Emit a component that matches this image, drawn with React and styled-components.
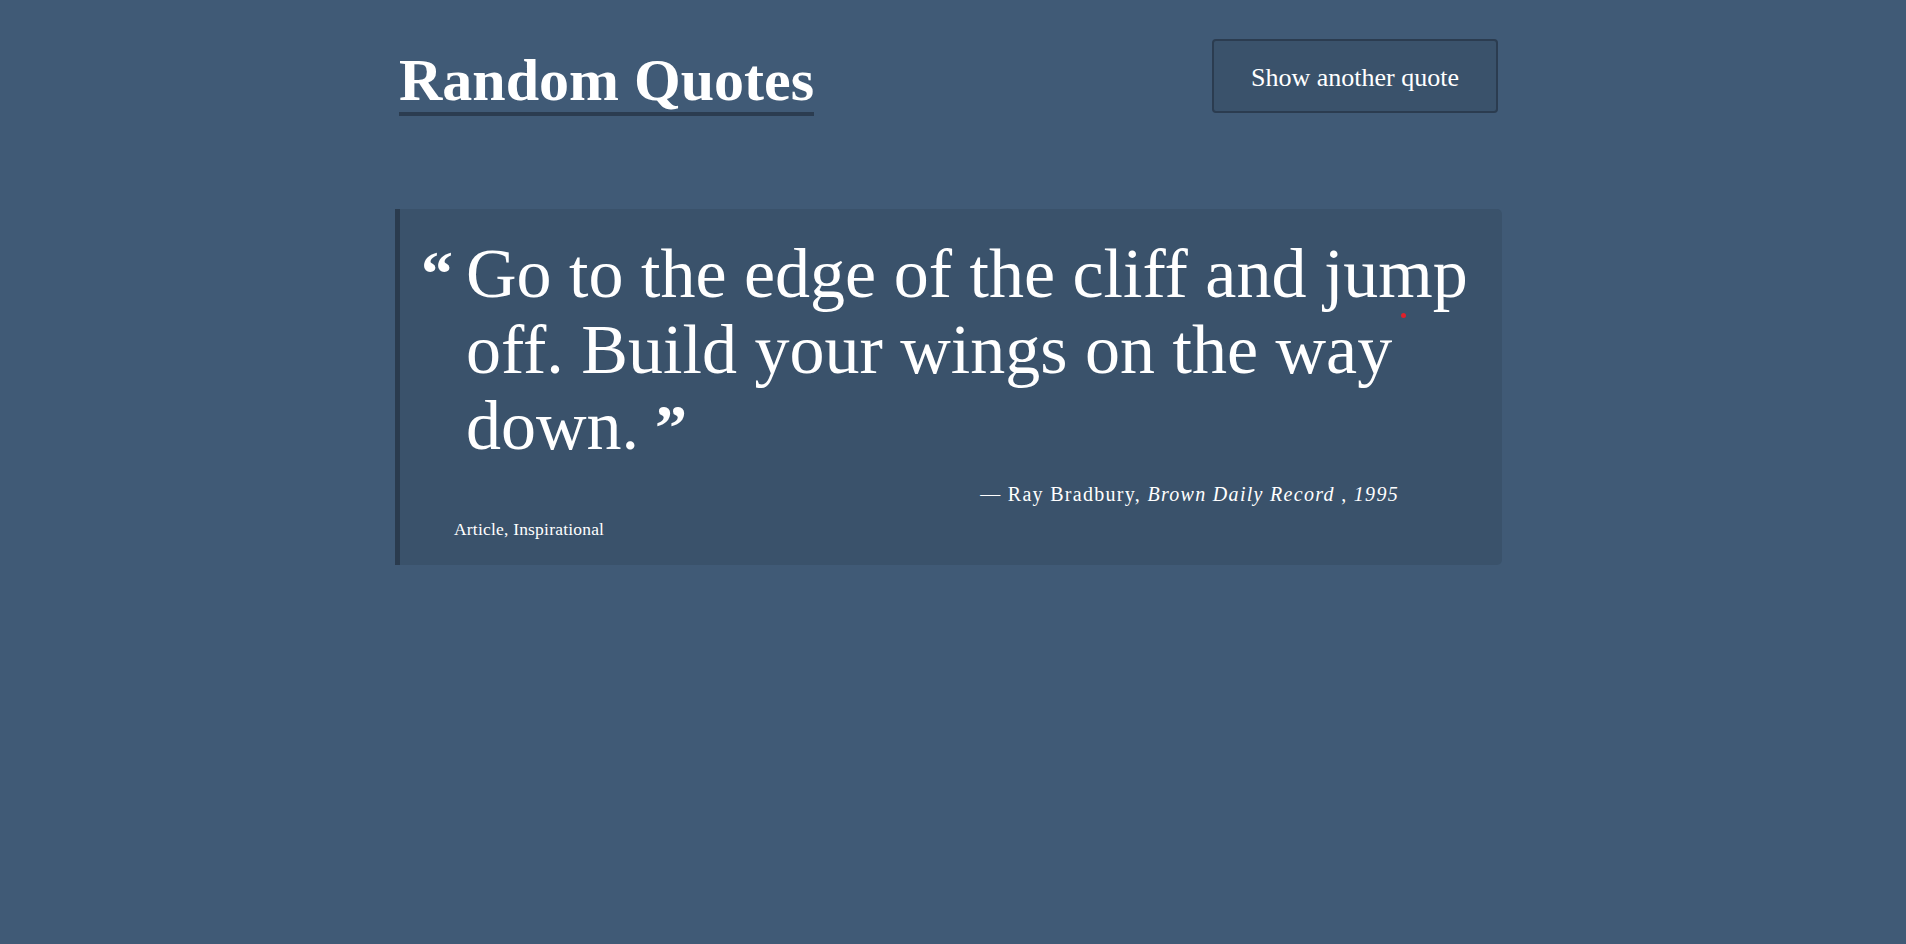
import React from 'react';
import styled, { createGlobalStyle } from 'styled-components';

const GlobalStyle = createGlobalStyle`
  html, body {
    margin: 0;
    padding: 0;
    background: #405a76;
    min-height: 100%;
  }
  body {
    font-family: 'Liberation Serif', 'DejaVu Serif', serif;
    color: #ffffff;
  }
`;

const Page = styled.div`
  min-height: 944px;
  background: #405a76;
`;

const Container = styled.div`
  width: 1107px;
  margin: 0 0 0 calc(50% - 558px);
  padding-top: 39px;
`;

const Header = styled.header`
  display: flex;
  justify-content: space-between;
  align-items: flex-start;
  padding: 0 4px;
`;

const Title = styled.h1`
  margin: 11px 0 0;
  font-size: 60px;
  line-height: 1.03;
  font-weight: 700;
  border-bottom: 4px solid #2b3c50;
`;

const Button = styled.button`
  width: 286px;
  height: 74px;
  padding-top: 4px;
  background: #3a526b;
  border: 2px solid #2b3c50;
  border-radius: 4px;
  color: #ffffff;
  font-family: 'Liberation Serif', 'DejaVu Serif', serif;
  font-size: 26px;
  cursor: pointer;
`;

const Card = styled.blockquote`
  position: relative;
  margin: 93px 0 0;
  padding: 27px 20px 24px 21px;
  background: #3a526b;
  border-left: 5px solid #2a3b4e;
  border-radius: 0 5px 5px 0;
`;

const QuoteRow = styled.div`
  display: flex;
  align-items: flex-start;
`;

const OpenMark = styled.span`
  width: 45px;
  flex-shrink: 0;
  font-size: 64px;
  font-weight: 700;
  line-height: 76px;
`;

const QuoteText = styled.p`
  margin: 0;
  width: 1014px;
  font-size: 70px;
  line-height: 76px;
`;

const CloseMark = styled.span`
  font-size: 64px;
  font-weight: 700;
  margin-left: 16px;
`;

const Cite = styled.footer`
  display: flex;
  justify-content: flex-end;
  margin-top: 13px;
  padding-right: 83px;
  font-size: 20px;
  line-height: 30px;
  letter-spacing: 1.3px;
`;

const Source = styled.i`
  font-style: italic;
`;

const Tags = styled.div`
  margin: 8px 0 0 33px;
  font-size: 17.5px;
  line-height: 24px;
  letter-spacing: 0.2px;
`;

const Dot = styled.span`
  position: absolute;
  left: 1001px;
  top: 104px;
  width: 5px;
  height: 5px;
  border-radius: 50%;
  background: #e0202a;
`;

export default function App() {
  return (
    <Page>
      <GlobalStyle />
      <Container>
        <Header>
          <Title>Random Quotes</Title>
          <Button>Show another quote</Button>
        </Header>
        <Card>
          <QuoteRow>
            <OpenMark>“</OpenMark>
            <QuoteText>
              Go to the edge of the cliff and jump off. Build your wings on the way down.
              <CloseMark>”</CloseMark>
            </QuoteText>
          </QuoteRow>
          <Cite>
            <span>
              — Ray Bradbury, <Source>Brown Daily Record</Source> , <Source>1995</Source>
            </span>
          </Cite>
          <Tags>Article, Inspirational</Tags>
          <Dot />
        </Card>
      </Container>
    </Page>
  );
}
